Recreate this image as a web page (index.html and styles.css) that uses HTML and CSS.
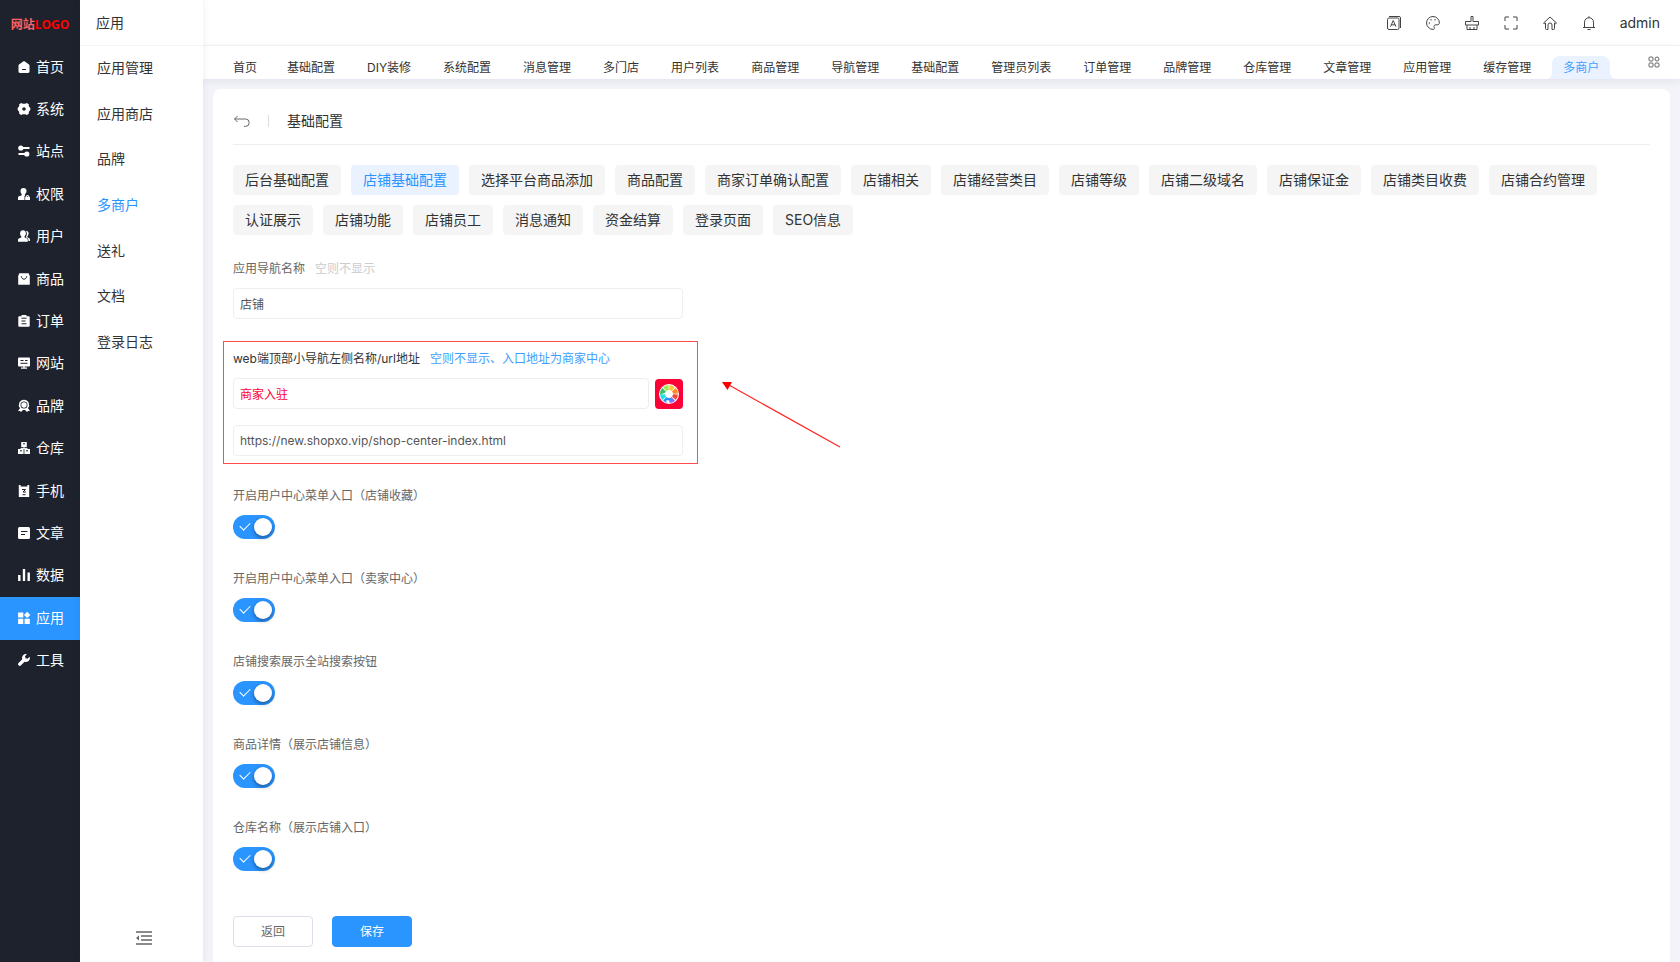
FILE: index.html
```html
<!DOCTYPE html>
<html lang="zh-CN">
<head>
  <meta charset="UTF-8" />
  <meta name="viewport" content="width=device-width, initial-scale=1.0"/>
  <title>多商户 - 基础配置</title>
  <link rel="stylesheet" href="styles.css">
</head>
<body>
  <div class="layout">
    <aside class="sidebar">
      <a href="#" class="logo">网站<span>LOGO</span></a>
      <nav class="main-menu">
        <a href="#"><svg viewBox="0 0 12 12"><path fill="currentColor" d="M5.2.4a1.3 1.3 0 0 1 1.6 0l4.2 3.1c.3.3.5.6.5 1v6c0 .8-.6 1.4-1.4 1.4H1.900C1.100 11.900.5 11.300.5 10.500v-6c0-.4.2-.7.5-1z"/><path class="cut" d="M4 8.500h4"/></svg>首页</a>
        <a href="#"><svg viewBox="0 0 12 12"><path fill="currentColor" fill-rule="evenodd" d="M3.200 0 4.800.7h2.400L8.800 0l2 1.200v2L12.300 5v2l-1.500 1.800v2L8.800 12l-1.600-.7H4.800L3.200 12l-2-1.200v-2L-.3 7V5l1.500-1.800v-2zM6 4.200a1.800 1.800 0 1 0 0 3.600 1.800 1.800 0 0 0 0-3.600z"/></svg>系统</a>
        <a href="#"><svg viewBox="0 0 12 12"><circle cx="2.800" cy="3" r="2.600" fill="currentColor"/><circle cx="8.800" cy="9" r="2.600" fill="currentColor"/><path d="M5 3h6.500M.5 9H7" stroke="currentColor" stroke-width="1.800"/></svg>站点</a>
        <a href="#"><svg viewBox="0 0 12 12"><path fill="currentColor" d="M5.500 0a3 3 0 0 1 3 3c0 1.300-.6 2.300-1.500 3.200v1.500H6.500V12H0V9.700c0-1 .7-1.600 1.600-1.800l2.100-.6V6C3 5.300 2.500 4.300 2.500 3a3 3 0 0 1 3-3z"/><path fill="currentColor" d="M7.200 8.700h.6a1.700 1.700 0 0 1 3.400 0h.8V12H7.200zm1.500 0h1.600a.8.8 0 0 0-1.600 0z"/></svg>权限</a>
        <a href="#"><svg viewBox="0 0 12 12"><path fill="currentColor" d="M5 .3c1.700 0 2.900 1.200 2.900 3 0 1.300-.6 2.300-1.300 3v1.100l2 .8c.8.4 1.200 1 1.200 2v1.600H0v-1.600c0-.9.5-1.600 1.300-1.900l2.100-.8V6.400c-.8-.7-1.300-1.700-1.300-3C2.100 1.500 3.300.3 5 .3z"/><path fill="currentColor" d="M8 .8c1.500 0 2.600 1.100 2.600 2.600 0 1.300-.6 2.100-1.200 2.700v1.100l1.400.7c.9.4 1.200 1 1.200 2v1.100h-1.500c0-1.500-.4-2.700-1.700-3.300l-1-.5C9 5.400 9.400 2.900 8 .8z"/></svg>用户</a>
        <a href="#"><svg viewBox="0 0 12 12"><path fill="currentColor" d="M1.300.2h9.400l1.100 3v8.500H.2V3.200z"/><path class="cut" d="M3.300 3.200c.4 4 5 4 5.400 0"/></svg>商品</a>
        <a href="#"><svg viewBox="0 0 12 12"><rect x=".3" y="1.200" width="11.400" height="10.600" rx="1" fill="currentColor"/><path d="M3.500 0h5v3h-5z" fill="currentColor"/><path class="cut" d="M3.500 3.200h5M3.500 6h4M3.500 8.800h5"/></svg>订单</a>
        <a href="#"><svg viewBox="0 0 12 12"><rect y=".5" width="12" height="9" rx="1" fill="currentColor"/><path d="M6 9v2M3 11.200h6" stroke="currentColor" stroke-width="1.300"/><path class="cut" d="M2.500 3.500h3M7 3.500h2.500M2.500 6.300h7"/></svg>网站</a>
        <a href="#"><svg viewBox="0 0 12 12"><path fill="currentColor" fill-rule="evenodd" d="M6-.2a5.200 5.200 0 0 1 4 8.500l2 2.700-2 .1-1 .9-2-2H5l-2 2-1-.9-2-.1 2-2.700A5.200 5.200 0 0 1 6-.2zm0 1.700a3.500 3.500 0 1 0 0 7 3.500 3.500 0 0 0 0-7z"/><circle cx="6" cy="5" r="2.700" fill="currentColor"/></svg>品牌</a>
        <a href="#"><svg viewBox="0 0 12 12"><rect x="3.200" width="5.600" height="5" fill="currentColor"/><path d="M0 7h5.600v5H0zM6.400 7H12v5H6.400z" fill="currentColor"/><path d="M6 5v2M2.500 6.400h7" stroke="currentColor"/><path class="cut" d="M5 1.800h2M2 8.800h2M8 8.800h2"/></svg>仓库</a>
        <a href="#"><svg viewBox="0 0 12 12"><path d="M.8 0h1.800v1.500h6.800V0h1.800v12H.8z" fill="currentColor"/><path class="cut" d="M4 4.500h3.500L5 7h3M4.500 9.700h3"/></svg>手机</a>
        <a href="#"><svg viewBox="0 0 12 12"><rect width="12" height="12" rx="1.500" fill="currentColor"/><path class="cut" d="M3 4.500h6.500M3 7.500h4"/></svg>文章</a>
        <a href="#"><svg viewBox="0 0 12 12"><path d="M1.300 6v6M6 0v12M10.700 3.500V12" stroke="currentColor" stroke-width="2.400"/></svg>数据</a>
        <a href="#" class="active"><svg viewBox="0 0 12 12"><path d="M.1.600h5.200v5H.1zM.1 6.700h5.200v5.200H.1zM6.600 6.700h5.200v5.200H6.600zM9.200-.3 12.300 2.900 9.200 6.100 6 2.900z" fill="currentColor"/></svg>应用</a>
        <a href="#"><svg viewBox="0 0 12 12"><path fill="currentColor" d="M8.800.2 7 2.300l.5 2 2 .4L11.700 2.800c.8 2.600-1 5.200-3.600 5.200-.6 0-1-.1-1.500-.3L3 11.300a1.700 1.700 0 0 1-2.500-2.400l3.800-3.600C3.300 2.500 5.700-.6 8.800.2z"/></svg>工具</a>
      </nav>
    </aside>

    <aside class="submenu">
      <h2>应用</h2>
      <nav>
        <a href="#">应用管理</a>
        <a href="#">应用商店</a>
        <a href="#">品牌</a>
        <a href="#" class="active">多商户</a>
        <a href="#">送礼</a>
        <a href="#">文档</a>
        <a href="#">登录日志</a>
      </nav>
      <button type="button" class="collapse" aria-label="收起菜单">
        <svg viewBox="0 0 16 16"><path d="M0 2h16M5 6h11M5 10h11M0 14h16" stroke="currentColor" stroke-width="1.300"/><path d="M3 5.500v5L0 8z" fill="currentColor"/></svg>
      </button>
    </aside>

    <div class="page">
      <header class="topbar">
        <button type="button" aria-label="语言"><svg viewBox="0 0 16 16"><rect x="1.500" y="3" width="11.500" height="11.500" rx="1.500"/><path d="M3 1.500h10a1.500 1.500 0 0 1 1.500 1.500v10M4.500 11.700l2.700-6.200L10 11.700M5.500 9.800h3.600"/></svg></button>
        <button type="button" aria-label="主题"><svg viewBox="0 0 16 16"><path d="M8 1.500a6.400 6.400 0 1 0 0 12.900c1.300 0 1.700-1 1.200-2-.6-1.400.1-2.600 1.500-2.600h1.800c1.200 0 1.900-.8 1.900-2A6.500 6.500 0 0 0 8 1.500z"/><path d="M3.800 8h1M5.500 4.800h1M9.500 4.800h1" stroke-width="1.500"/></svg></button>
        <button type="button" aria-label="清理"><svg viewBox="0 0 16 16"><path d="M7 6.500v-5h2v5h5.500V10h-13V6.500zM3 10v4.500h10V10M6 14.500V12M10 14.500V12"/></svg></button>
        <button type="button" aria-label="全屏"><svg viewBox="0 0 16 16"><path d="M2 6V2h4M10 2h4v4M14 10v4h-4M6 14H2v-4"/></svg></button>
        <button type="button" aria-label="主页"><svg viewBox="0 0 16 16"><path d="M1.500 8 8 2l6.500 6-.8.8-1.200-.8v5.500a1 1 0 0 1-1 1h-1.500V10a2 2 0 0 0-4 0v4.500H4.500a1 1 0 0 1-1-1V8l-1.200.8z"/></svg></button>
        <button type="button" aria-label="通知"><svg viewBox="0 0 16 16"><path d="M2 12.500h12M3.500 12.500v-5.300a4.500 4.500 0 0 1 9 0v5.300M6.500 14.500h3M8 2.700V1.300"/></svg></button>
        <a href="#" class="user">admin</a>
      </header>

      <div class="tabbar">
        <nav class="tabs">
          <a href="#">首页</a>
          <a href="#">基础配置</a>
          <a href="#">DIY装修</a>
          <a href="#">系统配置</a>
          <a href="#">消息管理</a>
          <a href="#">多门店</a>
          <a href="#">用户列表</a>
          <a href="#">商品管理</a>
          <a href="#">导航管理</a>
          <a href="#">基础配置</a>
          <a href="#">管理员列表</a>
          <a href="#">订单管理</a>
          <a href="#">品牌管理</a>
          <a href="#">仓库管理</a>
          <a href="#">文章管理</a>
          <a href="#">应用管理</a>
          <a href="#">缓存管理</a>
          <a href="#" class="active">多商户</a>
        </nav>
        <button type="button" class="tab-more" aria-label="更多">
          <svg viewBox="0 0 12 12"><rect x="1" y="1" width="4" height="4" rx="1"/><circle cx="9" cy="3" r="2"/><rect x="1" y="7" width="4" height="4" rx="1"/><rect x="7" y="7" width="4" height="4" rx="1"/></svg>
        </button>
      </div>

      <main class="card">
        <div class="card-head">
          <a href="#" aria-label="返回上一页"><svg viewBox="0 0 18 12"><path d="M4.500 1 1.500 4l3 3M1.500 4h11a3.700 3.700 0 0 1 0 7.400H11"/></svg></a>
          <h1>基础配置</h1>
        </div>

        <nav class="chips">
          <a href="#">后台基础配置</a>
          <a href="#" class="active">店铺基础配置</a>
          <a href="#">选择平台商品添加</a>
          <a href="#">商品配置</a>
          <a href="#">商家订单确认配置</a>
          <a href="#">店铺相关</a>
          <a href="#">店铺经营类目</a>
          <a href="#">店铺等级</a>
          <a href="#">店铺二级域名</a>
          <a href="#">店铺保证金</a>
          <a href="#">店铺类目收费</a>
          <a href="#">店铺合约管理</a>
          <a href="#">认证展示</a>
          <a href="#">店铺功能</a>
          <a href="#">店铺员工</a>
          <a href="#">消息通知</a>
          <a href="#">资金结算</a>
          <a href="#">登录页面</a>
          <a href="#">SEO信息</a>
        </nav>

        <form>
          <div class="field">
            <label for="nav-name">应用导航名称<span class="hint">空则不显示</span></label>
            <input type="text" id="nav-name" value="店铺">
          </div>

          <div class="field marked">
            <label for="top-name">web端顶部小导航左侧名称/url地址<span class="hint">空则不显示、入口地址为商家中心</span></label>
            <div class="color-row">
              <input type="text" id="top-name" class="red" value="商家入驻">
              <button type="button" class="color-btn" aria-label="选择颜色">
                <svg viewBox="0 0 20 20">
                  <circle cx="10" cy="10" r="10" fill="#fff"/>
                  <g fill="none" stroke-width="5" transform="rotate(-87 10 10)">
                    <circle cx="10" cy="10" r="6.500" pathLength="80" stroke="#ffc53d" stroke-dasharray="8.500 71.500"/>
                    <circle cx="10" cy="10" r="6.500" pathLength="80" stroke="#ff8a1f" stroke-dasharray="8.500 71.500" stroke-dashoffset="-10"/>
                    <circle cx="10" cy="10" r="6.500" pathLength="80" stroke="#f04a3a" stroke-dasharray="8.500 71.500" stroke-dashoffset="-20"/>
                    <circle cx="10" cy="10" r="6.500" pathLength="80" stroke="#8a6ff0" stroke-dasharray="8.500 71.500" stroke-dashoffset="-30"/>
                    <circle cx="10" cy="10" r="6.500" pathLength="80" stroke="#1f94ff" stroke-dasharray="8.500 71.500" stroke-dashoffset="-40"/>
                    <circle cx="10" cy="10" r="6.500" pathLength="80" stroke="#1fdfe8" stroke-dasharray="8.500 71.500" stroke-dashoffset="-50"/>
                    <circle cx="10" cy="10" r="6.500" pathLength="80" stroke="#35c46a" stroke-dasharray="8.500 71.500" stroke-dashoffset="-60"/>
                    <circle cx="10" cy="10" r="6.500" pathLength="80" stroke="#a5e64b" stroke-dasharray="8.500 71.500" stroke-dashoffset="-70"/>
                  </g>
                </svg>
              </button>
            </div>
            <input type="text" aria-label="url地址" value="https://new.shopxo.vip/shop-center-index.html">
            <svg class="arrow" viewBox="0 0 120 67"><path d="M6 3.500 118 66" stroke="#f22" stroke-width="1.200"/><path d="M0 1h10L5.500 9z" fill="red"/></svg>
          </div>

          <div class="field">
            <label for="sw1">开启用户中心菜单入口（店铺收藏）</label>
            <input type="checkbox" id="sw1" class="switch" checked>
          </div>
          <div class="field">
            <label for="sw2">开启用户中心菜单入口（卖家中心）</label>
            <input type="checkbox" id="sw2" class="switch" checked>
          </div>
          <div class="field">
            <label for="sw3">店铺搜索展示全站搜索按钮</label>
            <input type="checkbox" id="sw3" class="switch" checked>
          </div>
          <div class="field">
            <label for="sw4">商品详情（展示店铺信息）</label>
            <input type="checkbox" id="sw4" class="switch" checked>
          </div>
          <div class="field">
            <label for="sw5">仓库名称（展示店铺入口）</label>
            <input type="checkbox" id="sw5" class="switch" checked>
          </div>

          <div class="actions">
            <button type="button">返回</button>
            <button type="submit" class="primary">保存</button>
          </div>
        </form>
      </main>
    </div>
  </div>
</body>
</html>
```
FILE: styles.css
```css
:root {
  --primary: #2a94ff;
  --primary-light: #eaf2ff;
  --dark: #1e222d;
  --text: #333;
  --text-gray: #666;
  --line: #eee;
}

* {
  box-sizing: border-box;
}

body {
  margin: 0;
  font-family: Inter, "Noto Sans CJK SC", sans-serif;
  font-size: 12px;
  line-height: 20px;
  color: var(--text);
  background: #f3f3f9;
}

a {
  color: inherit;
  text-decoration: none;
}

button,
input {
  font: inherit;
  color: inherit;
}

button {
  padding: 0;
  border: 0;
  background: none;
  cursor: pointer;
}

svg {
  display: block;
}

h1,
h2 {
  margin: 0;
  font-size: 14px;
  font-weight: normal;
}

.layout {
  display: flex;
  min-height: 100vh;
}

/* left menu */
.sidebar {
  flex: none;
  width: 80px;
  background: var(--dark);
  color: #fff;
}

.logo {
  display: block;
  height: 46px;
  padding-top: 2px;
  line-height: 46px;
  text-align: center;
  font-family: "Open Sans", "Noto Sans CJK SC", sans-serif;
  font-weight: bold;
  color: #ff6161;
}

.logo span {
  color: #f00;
}

.main-menu {
  display: grid;
  grid-auto-rows: 1fr;
  height: 636px;
}

.main-menu a {
  display: flex;
  align-items: center;
  gap: 6px;
  padding: 0 0 1px 18px;
  font-size: 14px;
}

.main-menu a.active {
  background: var(--primary);
}

.main-menu svg {
  width: 12px;
  height: 12px;
  overflow: visible;
}

.main-menu .cut {
  fill: none;
  stroke: var(--dark);
}

/* second menu */
.submenu {
  display: flex;
  flex-direction: column;
  flex: none;
  width: 123px;
  background: #fff;
  box-shadow: 0 0 8px rgba(40, 40, 100, 0.08);
  z-index: 1;
}

.submenu h2 {
  height: 46px;
  padding-left: 16px;
  line-height: 46px;
  border-bottom: 1px solid #f5f5f5;
}

.submenu nav {
  display: grid;
  grid-auto-rows: 1fr;
  height: 319px;
  padding-left: 17px;
  font-size: 14px;
}

.submenu nav a {
  display: flex;
  align-items: center;
  padding-bottom: 1px;
}

.submenu .active {
  color: var(--primary);
}

.collapse {
  margin: auto auto 16px 56px;
  color: var(--text-gray);
}

.collapse svg {
  width: 16px;
  height: 16px;
}

/* right side */
.page {
  display: flex;
  flex-direction: column;
  flex: 1;
  min-width: 0;
}

.topbar {
  display: flex;
  justify-content: flex-end;
  align-items: center;
  gap: 23px;
  height: 46px;
  padding-right: 20px;
  background: #fff;
  border-bottom: 1px solid #f5f5f5;
}

.topbar svg {
  width: 16px;
  height: 16px;
  fill: none;
  stroke: #444;
}

.user {
  font-size: 14px;
}

.tabbar {
  display: flex;
  justify-content: space-between;
  height: 33px;
  padding: 0 20px;
  background: #fff;
  box-shadow: 0 2px 8px rgba(40, 40, 100, 0.08);
}

.tabs {
  display: flex;
  align-items: flex-end;
  gap: 10px;
  white-space: nowrap;
}

.tabs a {
  position: relative;
  height: 23px;
  padding: 0 11px;
  line-height: 23px;
}

.tabs a:first-child {
  padding: 0 9px 0 10px;
}

.tabs .active {
  color: #409eff;
  background: var(--primary-light);
  border-radius: 8px 8px 0 0;
}

.tabs .active::before,
.tabs .active::after {
  content: "";
  position: absolute;
  bottom: 0;
  width: 6px;
  height: 6px;
}

.tabs .active::before {
  right: 100%;
  background: radial-gradient(circle at 0 0, transparent 6px, var(--primary-light) 6px);
}

.tabs .active::after {
  left: 100%;
  background: radial-gradient(circle at 100% 0, transparent 6px, var(--primary-light) 6px);
}

.tab-more {
  padding-bottom: 1px;
}

.tab-more svg {
  width: 12px;
  height: 12px;
  fill: none;
  stroke: var(--text-gray);
}

.card {
  flex: 1;
  margin: 10px 10px 0;
  padding: 0 20px 15px;
  background: #fff;
  border-radius: 8px 8px 0 0;
}

.card-head {
  display: flex;
  align-items: center;
  height: 56px;
  padding-top: 8px;
  border-bottom: 1px solid var(--line);
}

.card-head svg {
  width: 18px;
  height: 12px;
  fill: none;
  stroke: var(--text-gray);
}

.card-head h1 {
  display: flex;
  align-items: center;
  margin-left: 17px;
}

.card-head h1::before {
  content: "";
  width: 1px;
  height: 12px;
  margin-right: 18px;
  background: #ddd;
}

.chips {
  display: flex;
  flex-wrap: wrap;
  gap: 10px;
  margin: 20px 0 24px;
}

.chips a {
  padding: 0 12px;
  font-size: 14px;
  line-height: 30px;
  background: #f5f5f5;
  border-radius: 4px;
}

.chips .active {
  color: var(--primary);
  background: var(--primary-light);
}

/* form */
.field {
  position: relative;
  max-width: 450px;
  margin-bottom: 30px;
}

.field label {
  display: block;
  margin-bottom: 9px;
  color: var(--text-gray);
}

.hint {
  margin-left: 10px;
  color: #ccc;
}

.field input[type="text"] {
  display: block;
  width: 100%;
  height: 31px;
  padding: 0 6px;
  color: #555;
  background: #fff;
  border: 1px solid var(--line);
  border-radius: 4px;
  outline: none;
}

.field input.red {
  color: #ff0036;
}

.color-row {
  display: flex;
  align-items: center;
  gap: 6px;
  margin-bottom: 16px;
}

.color-btn {
  display: flex;
  align-items: center;
  justify-content: center;
  flex: none;
  width: 28px;
  height: 30px;
  background: #ff0036;
  border-radius: 4px;
}

.color-btn svg {
  width: 20px;
  height: 20px;
}

.marked label {
  color: var(--text);
}

.marked .hint {
  color: #409eff;
}

.marked::before {
  content: "";
  position: absolute;
  inset: -8px -15px -8px -10px;
  border: 1px solid #ff4d4d;
  pointer-events: none;
}

.arrow {
  position: absolute;
  top: 32px;
  left: calc(100% + 39px);
  width: 120px;
  height: 67px;
}

.switch {
  appearance: none;
  position: relative;
  display: block;
  width: 42px;
  height: 24px;
  margin: 0;
  background: #ddd;
  border-radius: 12px;
  cursor: pointer;
}

.switch::before {
  content: "";
  position: absolute;
  top: 3px;
  left: 3px;
  width: 18px;
  height: 18px;
  background: #fff;
  border-radius: 50%;
  box-shadow: 0 2px 4px rgba(0, 0, 0, 0.4);
}

.switch:checked {
  background: var(--primary);
}

.switch:checked::before {
  left: 21px;
}

.switch:checked::after {
  content: "";
  position: absolute;
  top: 7px;
  left: 7px;
  width: 9px;
  height: 5px;
  border: solid #fff;
  border-width: 0 0 1px 1px;
  transform: rotate(-45deg);
}

.actions {
  display: flex;
  gap: 19px;
  margin-top: 45px;
}

.actions button {
  width: 80px;
  height: 31px;
  color: var(--text-gray);
  border: 1px solid #dcdfe9;
  border-radius: 4px;
}

.actions .primary {
  color: #fff;
  background: var(--primary);
  border-color: var(--primary);
}
```
